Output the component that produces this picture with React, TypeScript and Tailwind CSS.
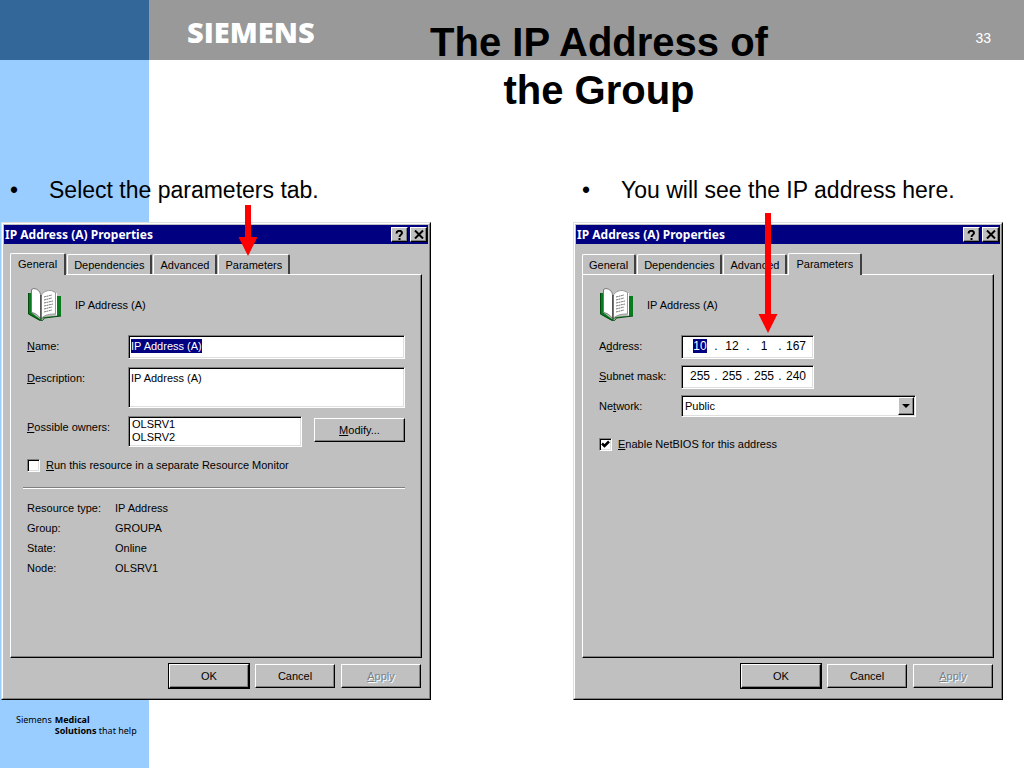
import type { ReactNode } from "react";

const raised =
  "border border-t-white border-l-white border-r-black border-b-black shadow-[inset_-1px_-1px_0_#808080]";
const sunken =
  "border border-t-[#808080] border-l-[#808080] border-r-white border-b-white bg-white shadow-[inset_1px_1px_0_#000,inset_-1px_-1px_0_#dfdfdf]";

const TABS = ["General", "Dependencies", "Advanced", "Parameters"];

const RESOURCE_INFO = [
  { label: "Resource type:", value: "IP Address" },
  { label: "Group:", value: "GROUPA" },
  { label: "State:", value: "Online" },
  { label: "Node:", value: "OLSRV1" },
];

function BookIcon() {
  return (
    <svg className="w-9 h-9 shrink-0" viewBox="0 0 36 36" fill="none" aria-hidden="true">
      <path d="M1 6h4v20l8 6 3-2 14-1V9h4v20l-18 2-3 3-12-7z" fill="#0a7a1e" />
      <path d="M1.500 6v21l11 6 3 .5 2-2.500 16.500-2" stroke="#064a12" strokeWidth="1" />
      <path d="M4.500 2.500 7 1.500c4 .5 6 3 6.500 6v24C11 28 8 26 4.500 25.500z" fill="#fff" stroke="#777" strokeWidth="1" />
      <path d="M14 9c2-4 5-5.500 9-5.500 2 0 3.500 1 5.500 2V27c-6 0-10 .5-14.500 4.500z" fill="#fff" stroke="#999" strokeWidth="1" />
      <path d="M14 8v24" stroke="#222" strokeWidth="1" />
      <path
        d="M17 10l8-2M17 13l8-2M17 16l9-2M17 19l9-2M17 22l8-2M17 25l8-2"
        stroke="#777"
        strokeWidth="1"
        strokeDasharray="2 .5"
      />
      <path d="M29.500 6v22" stroke="#fff" strokeWidth="1" />
    </svg>
  );
}

function Arrow({ length, className }: { length: number; className: string }) {
  const neck = length - 19;
  return (
    <svg
      className={`absolute z-10 pointer-events-none ${className}`}
      width={20}
      height={length}
      viewBox={`0 0 20 ${length}`}
      aria-hidden="true"
    >
      <path d={`M7 0h6v${neck}h6.500L10 ${length}L.5 ${neck}H7z`} fill="#f00" />
    </svg>
  );
}

function TitleButton({ label, children }: { label: string; children: ReactNode }) {
  return (
    <button
      type="button"
      aria-label={label}
      className={`w-[17px] h-[15px] flex items-center justify-center bg-[#c0c0c0] ${raised}`}
    >
      {children}
    </button>
  );
}

function Tabs({ active }: { active: string }) {
  return (
    <div role="tablist" className="flex items-end gap-px h-[22px]">
      {TABS.map((tab) => {
        const isActive = tab === active;
        return (
          <button
            key={tab}
            type="button"
            role="tab"
            aria-selected={isActive}
            className={`relative flex justify-center rounded-t-[2px] bg-[#c0c0c0] border-t border-l border-white border-r-2 border-r-[#404040] ${
              isActive ? "h-[22px] px-[7px] -mb-px z-10 leading-5" : "h-5 px-[6px] leading-5"
            }`}
          >
            {tab}
          </button>
        );
      })}
    </div>
  );
}

function DialogButton({
  children,
  isDefault = false,
  disabled = false,
}: {
  children: ReactNode;
  isDefault?: boolean;
  disabled?: boolean;
}) {
  return (
    <div className={isDefault ? "border border-black" : "border border-transparent"}>
      <button
        type="button"
        disabled={disabled}
        className={`w-20 h-6 bg-[#c0c0c0] ${raised} ${
          disabled ? "text-[#808080] [text-shadow:1px_1px_0_#fff]" : ""
        }`}
      >
        {children}
      </button>
    </div>
  );
}

function Dialog({ activeTab, children }: { activeTab: string; children: ReactNode }) {
  return (
    <section
      aria-label="IP Address (A) Properties"
      className="w-[430px] max-w-full bg-[#c0c0c0] border border-[#dfdfdf] border-r-black border-b-black font-['Liberation_Sans',Arial,sans-serif] text-[11px] leading-[14px] text-black"
    >
      <div className="border border-white border-r-[#808080] border-b-[#808080] p-px pb-[9px]">
        <header className="flex items-center h-[19px] gap-[2px] pr-px bg-[#000080] text-white">
          <h2 className="grow pl-px font-['Noto_Sans',sans-serif] font-bold text-[12px]">
            IP Address (A) Properties
          </h2>
          <TitleButton label="Help">
            <svg width="9" height="10" viewBox="0 0 9 10" fill="none">
              <path d="M1.500 3.500C1.500 0 7 0 7 3c0 2-2.500 1.500-2.500 4M4.500 8v2" stroke="#000" strokeWidth="2" />
            </svg>
          </TitleButton>
          <TitleButton label="Close">
            <svg width="10" height="9" viewBox="0 0 10 9" fill="none">
              <path d="M1 .5l8 8M9 .5l-8 8" stroke="#000" strokeWidth="2" />
            </svg>
          </TitleButton>
        </header>

        <div className="px-[6px] pt-[8px]">
          <Tabs active={activeTab} />
          <div
            role="tabpanel"
            className="min-h-[384px] border border-white border-r-black border-b-black shadow-[inset_-1px_-1px_0_#808080] px-4 pt-3"
          >
            <div className="flex items-center gap-3">
              <BookIcon />
              <span>IP Address (A)</span>
            </div>
            {children}
          </div>
          <footer className="flex justify-end gap-1 pt-[5px]">
            <DialogButton isDefault>OK</DialogButton>
            <DialogButton>Cancel</DialogButton>
            <DialogButton disabled>
              <u>A</u>pply
            </DialogButton>
          </footer>
        </div>
      </div>
    </section>
  );
}

function Checkbox({ id, checked = false, children }: { id: string; checked?: boolean; children: ReactNode }) {
  return (
    <div className="flex items-center gap-[6px]">
      <span className="grid">
        <input
          id={id}
          type="checkbox"
          defaultChecked={checked}
          className={`peer appearance-none col-start-1 row-start-1 w-[13px] h-[13px] ${sunken}`}
        />
        <svg
          className="col-start-1 row-start-1 w-[13px] h-[13px] pointer-events-none invisible peer-checked:visible"
          viewBox="0 0 13 13"
          fill="none"
        >
          <path d="M3 5.500l2.500 2.500 4.500-4.500" stroke="#000" strokeWidth="2.500" />
        </svg>
      </span>
      <label htmlFor={id}>{children}</label>
    </div>
  );
}

function GeneralPanel() {
  return (
    <>
      <div className="mt-3 grid grid-cols-[101px_1fr] gap-y-2 items-start">
        <label htmlFor="name" className="leading-[22px]">
          <u>N</u>ame:
        </label>
        <div className={`h-6 px-[2px] pt-[3px] ${sunken}`}>
          <input
            id="name"
            defaultValue="IP Address (A)"
            className="block field-sizing-content h-[14px] bg-[#000080] text-white outline-none"
          />
        </div>

        <label htmlFor="description" className="leading-[22px]">
          <u>D</u>escription:
        </label>
        <textarea
          id="description"
          defaultValue="IP Address (A)"
          className={`block w-full h-[41px] px-[2px] py-[3px] resize-none outline-none ${sunken}`}
        />

        <label htmlFor="owners" className="leading-[22px]">
          <u>P</u>ossible owners:
        </label>
        <div className="flex items-start gap-3">
          <select
            id="owners"
            size={2}
            className={`grow appearance-none h-[31px] px-[3px] py-px overflow-hidden outline-none ${sunken}`}
          >
            <option>OLSRV1</option>
            <option>OLSRV2</option>
          </select>
          <button type="button" className={`mt-[2px] w-[91px] h-6 bg-[#c0c0c0] ${raised}`}>
            <u>M</u>odify...
          </button>
        </div>
      </div>

      <div className="mt-[11px]">
        <Checkbox id="separate-monitor">
          <u>R</u>un this resource in a separate Resource Monitor
        </Checkbox>
      </div>

      <hr className="-ml-1 mt-[15px] h-[2px] border-t border-t-[#808080] border-b border-b-white" />

      <dl className="mt-[9px] grid grid-cols-[88px_1fr] leading-5">
        {RESOURCE_INFO.map((row) => (
          <div key={row.label} className="contents">
            <dt>{row.label}</dt>
            <dd>{row.value}</dd>
          </div>
        ))}
      </dl>
    </>
  );
}

function IpField({ id, octets, selected }: { id: string; octets: string[]; selected?: number }) {
  return (
    <div className={`flex w-[133px] h-6 pl-[6px] pt-[3px] text-[12px] ${sunken}`}>
      {octets.map((octet, i) => (
        <div key={i} className="flex">
          <span className="flex w-6 justify-center">
            <input
              id={i === 0 ? id : undefined}
              aria-label={i === 0 ? undefined : `Octet ${i + 1}`}
              defaultValue={octet}
              className={`field-sizing-content h-[14px] outline-none ${
                i === selected ? "bg-[#000080] text-white" : ""
              }`}
            />
          </span>
          {i < octets.length - 1 && <span className="w-2 text-center">.</span>}
        </div>
      ))}
    </div>
  );
}

function ParametersPanel() {
  return (
    <>
      <div className="mt-3 grid grid-cols-[82px_1fr] gap-y-[6px] items-start">
        <label htmlFor="address" className="leading-[22px]">
          A<u>d</u>dress:
        </label>
        <IpField id="address" octets={["10", "12", "1", "167"]} selected={0} />

        <label htmlFor="subnet" className="leading-[22px]">
          <u>S</u>ubnet mask:
        </label>
        <IpField id="subnet" octets={["255", "255", "255", "240"]} />

        <label htmlFor="network" className="leading-[22px]">
          Ne<u>t</u>work:
        </label>
        <div className="grid w-[235px]">
          <select
            id="network"
            className={`col-start-1 row-start-1 appearance-none w-full h-[22px] px-[3px] outline-none ${sunken}`}
          >
            <option>Public</option>
          </select>
          <span
            className={`col-start-1 row-start-1 justify-self-end self-center mr-[2px] w-4 h-[18px] flex items-center justify-center bg-[#c0c0c0] pointer-events-none ${raised}`}
          >
            <svg width="8" height="4" viewBox="0 0 8 4">
              <path d="M0 0h8L4 4z" fill="#000" />
            </svg>
          </span>
        </div>
      </div>

      <div className="mt-5">
        <Checkbox id="netbios" checked>
          <u>E</u>nable NetBIOS for this address
        </Checkbox>
      </div>
    </>
  );
}

function Step({ text, children }: { text: string; children: ReactNode }) {
  return (
    <li>
      <p className="flex text-[23px] leading-[26px] mb-[19px]">
        <span className="w-[49px] pl-[10px] shrink-0">•</span>
        <span>{text}</span>
      </p>
      <div className="relative pl-px">{children}</div>
    </li>
  );
}

export default function App() {
  return (
    <main className="grid min-h-screen bg-white font-['Liberation_Sans',Arial,sans-serif] text-black">
      <div
        className="col-start-1 row-start-1 grid grid-cols-[149px_1fr] grid-rows-[60px_1fr]"
        aria-hidden="true"
      >
        <div className="bg-[#336699]" />
        <div className="bg-[#999999]" />
        <div className="bg-[#99ccff]" />
      </div>

      <div className="col-start-1 row-start-1 z-10">
        <header className="grid grid-cols-[342px_1fr_168px] items-start">
          <span className="pl-[187px] pt-[13px] font-['Open_Sans',sans-serif] font-extrabold text-[29px] leading-[38px] text-white">
            SIEMENS
          </span>
          <h1 className="pt-[18px] text-center font-bold text-[40px] leading-[48px]">
            The IP Address of
            <br />
            the Group
          </h1>
          <span className="pt-7 pr-[33px] text-right text-sm text-white">33</span>
        </header>

        <ul className="mt-[63px] grid grid-cols-[143fr_113fr]">
          <Step text="Select the parameters tab.">
            <Dialog activeTab="General">
              <GeneralPanel />
            </Dialog>
            <Arrow length={51} className="left-[238px] -top-[17px]" />
          </Step>
          <Step text="You will see the IP address here.">
            <Dialog activeTab="Parameters">
              <ParametersPanel />
            </Dialog>
            <Arrow length={120} className="left-[186px] -top-[9px]" />
          </Step>
        </ul>

        <footer className="mt-[14px] pl-4 flex gap-[3px] font-['Noto_Sans',sans-serif] text-[9px] leading-[11px]">
          <span>Siemens</span>
          <div>
            <p className="font-bold">Medical</p>
            <p>
              <b>Solutions</b> that help
            </p>
          </div>
        </footer>
      </div>
    </main>
  );
}
